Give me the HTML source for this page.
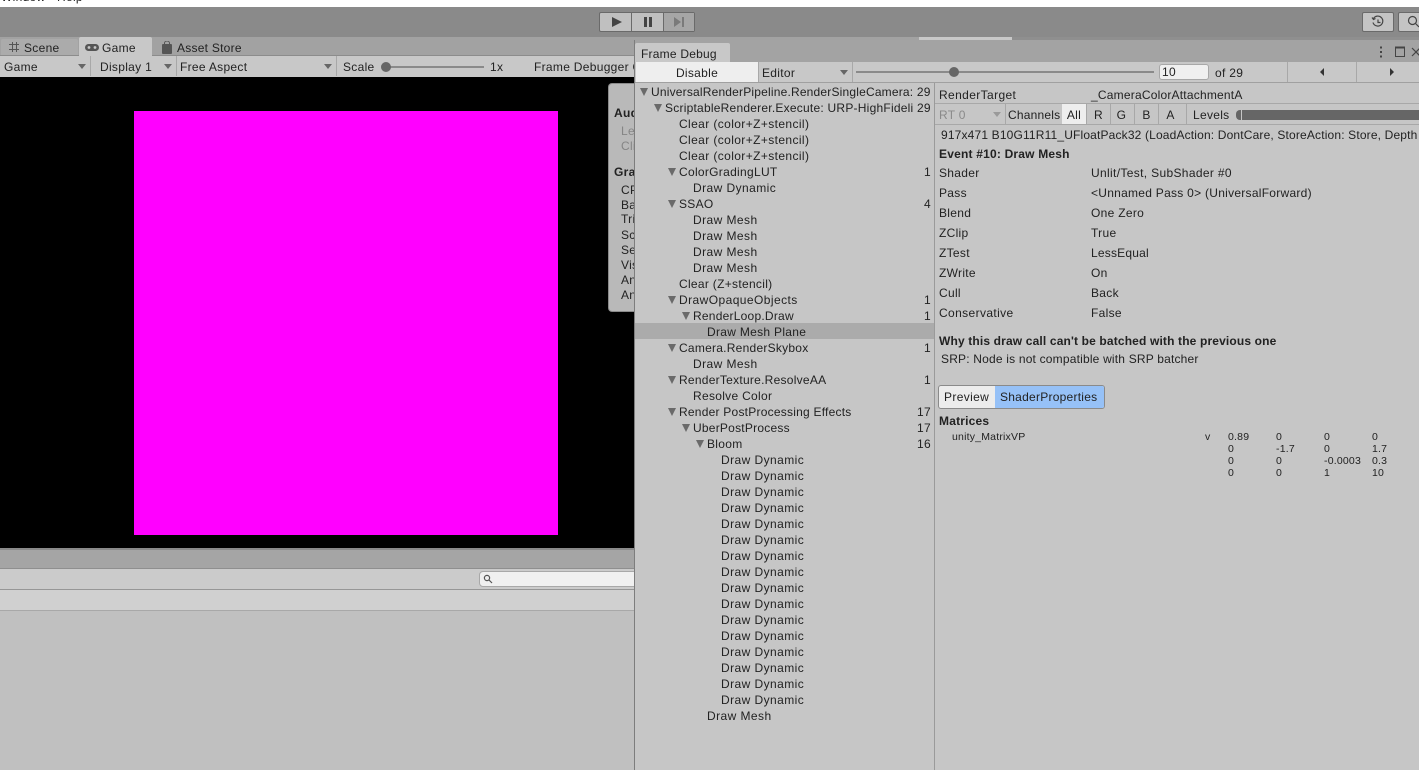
<!DOCTYPE html>
<html><head><meta charset="utf-8">
<style>
html,body{margin:0;padding:0;width:1419px;height:770px;overflow:hidden;background:#c0c0c0}
body{position:relative;font-family:"Liberation Sans",sans-serif;font-size:12px;color:#222}
.b{position:absolute}
.t{position:absolute;line-height:16px;height:16px;white-space:nowrap;letter-spacing:.3px}
.a{letter-spacing:.43px}
.r{position:absolute;line-height:16px;height:16px;white-space:nowrap;letter-spacing:.3px;text-align:right}
.tri{position:absolute;width:0;height:0;margin-left:1px;border-left:4px solid transparent;border-right:4px solid transparent;border-top:8px solid #6a6a6a}
.dd{position:absolute;width:0;height:0;border-left:4px solid transparent;border-right:4px solid transparent;border-top:5px solid #666}
.s{font-size:10.5px;letter-spacing:.2px;line-height:12px;height:12px}
svg{position:absolute;display:block}
</style></head><body>

<!-- OS menu -->
<div class="b" style="left:0;top:0;width:1419px;height:7px;background:#fff;overflow:hidden">
<span class="t" style="left:1px;top:-11px">Window</span><span class="t" style="left:57px;top:-11px">Help</span></div>

<!-- main toolbar -->
<div class="b" style="left:0;top:7px;width:1419px;height:30px;background:#8a8a8a"></div>
<div class="b" style="left:599px;top:12px;width:96px;height:20px;background:#c0c0c0;border:1px solid #6a6a6a;box-sizing:border-box;border-radius:2px"></div>
<div class="b" style="left:631px;top:12px;width:1px;height:20px;background:#6a6a6a"></div>
<div class="b" style="left:664px;top:13px;width:30px;height:18px;background:#a6a6a6"></div>
<div class="b" style="left:663px;top:12px;width:1px;height:20px;background:#6a6a6a"></div>
<svg style="left:611px;top:16px" width="12" height="12"><path d="M1 1L11 6L1 11Z" fill="#444"/></svg>
<svg style="left:643px;top:16px" width="10" height="12"><path d="M1 1h3v10H1zM6 1h3v10H6z" fill="#444"/></svg>
<svg style="left:673px;top:16px" width="12" height="12"><path d="M1 1L8 6L1 11Z M9 1h2v10H9z" fill="#7a7a7a"/></svg>
<div class="b" style="left:1362px;top:12px;width:32px;height:20px;background:#c4c4c4;border:1px solid #6a6a6a;box-sizing:border-box;border-radius:2px"></div>
<svg style="left:1371px;top:15px" width="14" height="14" fill="none" stroke="#444" stroke-width="1.2"><path d="M2.5 3.5A5 5 0 1 1 2 7.5M1 2.5L2.5 4.5L4.5 3.5M7 4.5V7.5H9.5"/></svg>
<div class="b" style="left:1398px;top:12px;width:24px;height:20px;background:#c4c4c4;border:1px solid #6a6a6a;box-sizing:border-box;border-radius:2px"></div>
<svg style="left:1407px;top:15px" width="12" height="14" fill="none" stroke="#444" stroke-width="1.2"><circle cx="5.5" cy="5.5" r="4"/><path d="M8.5 8.5L12 12"/></svg>

<!-- tab strip -->
<div class="b" style="left:0;top:37px;width:1419px;height:19px;background:#a2a2a2"></div>
<div class="b" style="left:1012px;top:37px;width:407px;height:3px;background:#8f8f8f"></div>
<div class="b" style="left:0;top:55px;width:636px;height:1px;background:#8c8c8c"></div>
<div class="b" style="left:1px;top:39px;width:77px;height:16px;background:#ababab;border-radius:2px 2px 0 0"></div>
<svg style="left:8px;top:41px" width="12" height="12" stroke="#555" stroke-width="1" fill="none"><path d="M4.5 1v10M8.5 1v10M1 3.5h10M1 8.5h10"/></svg>
<span class="t" style="left:24px;top:40px">Scene</span>
<div class="b" style="left:79px;top:37px;width:73px;height:19px;background:#c8c8c8;border-radius:2px 2px 0 0"></div>
<svg style="left:85px;top:43px" width="14" height="10"><rect x="0" y="1" width="14" height="7" rx="3.5" fill="#555"/><circle cx="4" cy="4.5" r="1.4" fill="#c8c8c8"/><circle cx="10" cy="4.5" r="1.4" fill="#c8c8c8"/></svg>
<span class="t" style="left:102px;top:40px">Game</span>
<svg style="left:162px;top:41px" width="11" height="13"><rect x="0" y="3" width="10" height="10" rx="1" fill="#555"/><path d="M2.5 4V2a2.5 2 0 0 1 5 0v2" fill="none" stroke="#555"/></svg>
<span class="t" style="left:177px;top:40px;letter-spacing:.25px">Asset Store</span>

<!-- game toolbar -->
<div class="b" style="left:0;top:56px;width:636px;height:21px;background:#c8c8c8"></div>
<div class="b" style="left:90px;top:56px;width:1px;height:20px;background:#a8a8a8"></div>
<div class="b" style="left:176px;top:56px;width:1px;height:20px;background:#a8a8a8"></div>
<div class="b" style="left:336px;top:56px;width:1px;height:20px;background:#a8a8a8"></div>
<span class="t" style="left:4px;top:59px">Game</span><div class="dd" style="left:78px;top:64px"></div>
<span class="t" style="left:100px;top:59px">Display 1</span><div class="dd" style="left:164px;top:64px"></div>
<span class="t" style="left:180px;top:59px">Free Aspect</span><div class="dd" style="left:324px;top:64px"></div>
<span class="t" style="left:343px;top:59px">Scale</span>
<div class="b" style="left:386px;top:66px;width:98px;height:2px;background:#8a8a8a"></div>
<div class="b" style="left:381px;top:62px;width:10px;height:10px;border-radius:50%;background:#666"></div>
<span class="t" style="left:490px;top:59px">1x</span>
<span class="t" style="left:534px;top:59px">Frame Debugger O</span>

<!-- game view -->
<div class="b" style="left:0;top:77px;width:636px;height:471px;background:#000"></div>
<div class="b" style="left:134px;top:111px;width:424px;height:424px;background:#f0f"></div>

<!-- stats -->
<div class="b" style="left:609px;top:84px;width:30px;height:227px;background:#b9b9b9;border-radius:3px;box-shadow:0 0 0 1px #8a8a8a;overflow:hidden">
<span class="t" style="left:5px;top:21px;font-weight:bold">Audio</span>
<span class="t" style="left:12px;top:39px;color:#858585">Level</span>
<span class="t" style="left:12px;top:54px;color:#858585">Clip</span>
<span class="t" style="left:5px;top:80px;font-weight:bold">Graphics</span>
<span class="t" style="left:12px;top:98px">CPU</span>
<span class="t" style="left:12px;top:113px">Batches</span>
<span class="t" style="left:12px;top:127px">Tris</span>
<span class="t" style="left:12px;top:143px">Screen</span>
<span class="t" style="left:12px;top:158px">SetPass</span>
<span class="t" style="left:12px;top:173px">Visible</span>
<span class="t" style="left:12px;top:188px">Animations</span>
<span class="t" style="left:12px;top:203px">Animator</span>
</div>

<!-- bottom panels -->
<div class="b" style="left:0;top:548px;width:636px;height:2px;background:#8a8a8a"></div>
<div class="b" style="left:0;top:550px;width:636px;height:18px;background:#a5a5a5"></div>
<div class="b" style="left:0;top:568px;width:636px;height:1px;background:#8f8f8f"></div>
<div class="b" style="left:0;top:569px;width:636px;height:20px;background:#cbcbcb"></div>
<div class="b" style="left:0;top:589px;width:636px;height:1px;background:#969696"></div>
<div class="b" style="left:0;top:590px;width:636px;height:20px;background:#d0d0d0"></div>
<div class="b" style="left:0;top:610px;width:636px;height:1px;background:#a8a8a8"></div>
<div class="b" style="left:0;top:611px;width:636px;height:159px;background:#c0c0c0"></div>
<div class="b" style="left:479px;top:571px;width:160px;height:16px;background:#f0f0f0;border:1px solid #a8a8a8;box-sizing:border-box;border-radius:4px"></div>
<svg style="left:483px;top:574px" width="10" height="10" fill="none" stroke="#555" stroke-width="1.2"><circle cx="4" cy="4" r="2.6"/><path d="M6 6L9 9"/></svg>

<!-- thin strip of window behind -->
<div class="b" style="left:919px;top:37px;width:93px;height:3px;background:#c8c8c8"></div>

<!-- FRAME DEBUG WINDOW -->
<div class="b" style="left:634px;top:40px;width:785px;height:730px;background:#c6c6c6;border-left:1px solid #7d7d7d;box-sizing:border-box"></div>
<div class="b" style="left:635px;top:40px;width:784px;height:22px;background:#a3a3a3"></div>
<div class="b" style="left:635px;top:43px;width:95px;height:19px;background:#c8c8c8;border-radius:2px 2px 0 0"></div>
<span class="t" style="left:641px;top:46px;letter-spacing:.22px">Frame Debug</span>
<svg style="left:1378px;top:45px" width="41" height="14" fill="none" stroke="#444"><path d="M3 1.5v2M3 6v2M3 10.5v2" stroke-width="2"/><rect x="17.5" y="2.5" width="9" height="9" stroke-width="1"/><path d="M17 2.5h10" stroke-width="2"/><path d="M34 3l8 8M42 3l-8 8" stroke-width="1.2"/></svg>

<!-- FD toolbar -->
<div class="b" style="left:635px;top:62px;width:784px;height:20px;background:#c8c8c8"></div>
<div class="b" style="left:635px;top:82px;width:784px;height:1px;background:#a0a0a0"></div>
<div class="b" style="left:636px;top:62px;width:122px;height:20px;background:#eeeeee"></div>
<span class="t" style="left:636px;top:65px;width:122px;text-align:center">Disable</span>
<div class="b" style="left:758px;top:62px;width:1px;height:20px;background:#a8a8a8"></div>
<span class="t" style="left:762px;top:65px">Editor</span><div class="dd" style="left:840px;top:70px"></div>
<div class="b" style="left:852px;top:62px;width:1px;height:20px;background:#a8a8a8"></div>
<div class="b" style="left:856px;top:71px;width:298px;height:2px;background:#8a8a8a"></div>
<div class="b" style="left:949px;top:67px;width:10px;height:10px;border-radius:50%;background:#666"></div>
<div class="b" style="left:1159px;top:64px;width:50px;height:16px;background:#f0f0f0;border:1px solid #a8a8a8;box-sizing:border-box;border-radius:3px"></div>
<span class="t" style="left:1162px;top:64px">10</span>
<span class="t" style="left:1215px;top:65px">of 29</span>
<div class="b" style="left:1287px;top:62px;width:1px;height:20px;background:#a8a8a8"></div>
<div class="b" style="left:1356px;top:62px;width:1px;height:20px;background:#a8a8a8"></div>
<svg style="left:1320px;top:68px" width="5" height="8"><path d="M4 0V8L0 4Z" fill="#333"/></svg>
<svg style="left:1390px;top:68px" width="5" height="8"><path d="M0 0V8L4 4Z" fill="#333"/></svg>

<!-- tree divider -->
<div class="b" style="left:934px;top:83px;width:1px;height:687px;background:#9a9a9a"></div>
<div class="b" style="left:635px;top:323px;width:299px;height:16px;background:#ababab"></div>

<!-- tree -->
<div class="tri" style="left:639px;top:88px"></div><span class="t" style="left:651px;top:84px;letter-spacing:.19px">UniversalRenderPipeline.RenderSingleCamera: 29</span>
<div class="tri" style="left:653px;top:104px"></div><span class="t" style="left:665px;top:100px;letter-spacing:.23px">ScriptableRenderer.Execute: URP-HighFideli 29</span>
<span class="t a" style="left:679px;top:116px;letter-spacing:.39px">Clear (color+Z+stencil)</span>
<span class="t a" style="left:679px;top:132px;letter-spacing:.39px">Clear (color+Z+stencil)</span>
<span class="t a" style="left:679px;top:148px;letter-spacing:.39px">Clear (color+Z+stencil)</span>
<div class="tri" style="left:667px;top:168px"></div><span class="t" style="left:679px;top:164px">ColorGradingLUT</span><span class="r" style="right:488px;top:164px">1</span>
<span class="t a" style="left:693px;top:180px">Draw Dynamic</span>
<div class="tri" style="left:667px;top:200px"></div><span class="t" style="left:679px;top:196px">SSAO</span><span class="r" style="right:488px;top:196px">4</span>
<span class="t a" style="left:693px;top:212px">Draw Mesh</span>
<span class="t a" style="left:693px;top:228px">Draw Mesh</span>
<span class="t a" style="left:693px;top:244px">Draw Mesh</span>
<span class="t a" style="left:693px;top:260px">Draw Mesh</span>
<span class="t" style="left:679px;top:276px">Clear (Z+stencil)</span>
<div class="tri" style="left:667px;top:296px"></div><span class="t a" style="left:679px;top:292px">DrawOpaqueObjects</span><span class="r" style="right:488px;top:292px">1</span>
<div class="tri" style="left:681px;top:312px"></div><span class="t" style="left:693px;top:308px;letter-spacing:.23px">RenderLoop.Draw</span><span class="r" style="right:488px;top:308px">1</span>
<span class="t" style="left:707px;top:324px">Draw Mesh Plane</span>
<div class="tri" style="left:667px;top:344px"></div><span class="t" style="left:679px;top:340px;letter-spacing:.25px">Camera.RenderSkybox</span><span class="r" style="right:488px;top:340px">1</span>
<span class="t a" style="left:693px;top:356px">Draw Mesh</span>
<div class="tri" style="left:667px;top:376px"></div><span class="t" style="left:679px;top:372px;letter-spacing:.26px">RenderTexture.ResolveAA</span><span class="r" style="right:488px;top:372px">1</span>
<span class="t" style="left:693px;top:388px">Resolve Color</span>
<div class="tri" style="left:667px;top:408px"></div><span class="t" style="left:679px;top:404px;letter-spacing:.23px">Render PostProcessing Effects</span><span class="r" style="right:488px;top:404px">17</span>
<div class="tri" style="left:681px;top:424px"></div><span class="t" style="left:693px;top:420px;letter-spacing:.23px">UberPostProcess</span><span class="r" style="right:488px;top:420px">17</span>
<div class="tri" style="left:695px;top:440px"></div><span class="t" style="left:707px;top:436px">Bloom</span><span class="r" style="right:488px;top:436px">16</span>
<span class="t a" style="left:721px;top:452px">Draw Dynamic</span>
<span class="t a" style="left:721px;top:468px">Draw Dynamic</span>
<span class="t a" style="left:721px;top:484px">Draw Dynamic</span>
<span class="t a" style="left:721px;top:500px">Draw Dynamic</span>
<span class="t a" style="left:721px;top:516px">Draw Dynamic</span>
<span class="t a" style="left:721px;top:532px">Draw Dynamic</span>
<span class="t a" style="left:721px;top:548px">Draw Dynamic</span>
<span class="t a" style="left:721px;top:564px">Draw Dynamic</span>
<span class="t a" style="left:721px;top:580px">Draw Dynamic</span>
<span class="t a" style="left:721px;top:596px">Draw Dynamic</span>
<span class="t a" style="left:721px;top:612px">Draw Dynamic</span>
<span class="t a" style="left:721px;top:628px">Draw Dynamic</span>
<span class="t a" style="left:721px;top:644px">Draw Dynamic</span>
<span class="t a" style="left:721px;top:660px">Draw Dynamic</span>
<span class="t a" style="left:721px;top:676px">Draw Dynamic</span>
<span class="t a" style="left:721px;top:692px">Draw Dynamic</span>
<span class="t a" style="left:707px;top:708px">Draw Mesh</span>

<!-- right pane -->
<span class="t" style="left:939px;top:87px;letter-spacing:.38px">RenderTarget</span>
<span class="t" style="left:1091px;top:87px;letter-spacing:.21px">_CameraColorAttachmentA</span>
<div class="b" style="left:935px;top:103px;width:484px;height:1px;background:#a8a8a8"></div>
<div class="b" style="left:935px;top:124px;width:484px;height:1px;background:#a8a8a8"></div>
<span class="t" style="left:939px;top:107px;color:#8a8a8a">RT 0</span><div class="dd" style="left:993px;top:112px;border-top-color:#9a9a9a"></div>
<div class="b" style="left:1005px;top:104px;width:1px;height:20px;background:#a8a8a8"></div>
<span class="t" style="left:1008px;top:107px;letter-spacing:.2px">Channels</span>
<div class="b" style="left:1062px;top:104px;width:24px;height:20px;background:#eeeeee"></div>
<span class="t" style="left:1062px;top:107px;width:24px;text-align:center">All</span>
<div class="b" style="left:1086px;top:104px;width:1px;height:20px;background:#a8a8a8"></div>
<span class="t" style="left:1087px;top:107px;width:23px;text-align:center">R</span>
<div class="b" style="left:1110px;top:104px;width:1px;height:20px;background:#a8a8a8"></div>
<span class="t" style="left:1110px;top:107px;width:23px;text-align:center">G</span>
<div class="b" style="left:1134px;top:104px;width:1px;height:20px;background:#a8a8a8"></div>
<span class="t" style="left:1135px;top:107px;width:23px;text-align:center">B</span>
<div class="b" style="left:1158px;top:104px;width:1px;height:20px;background:#a8a8a8"></div>
<span class="t" style="left:1159px;top:107px;width:23px;text-align:center">A</span>
<div class="b" style="left:1186px;top:104px;width:1px;height:20px;background:#a8a8a8"></div>
<span class="t" style="left:1193px;top:107px">Levels</span>
<div class="b" style="left:1236px;top:110px;width:183px;height:10px;background:#666;border-radius:4px 0 0 4px"></div>
<div class="b" style="left:1241px;top:110px;width:1px;height:10px;background:#c6c6c6"></div>

<span class="t" style="left:941px;top:127px;letter-spacing:.16px">917x471 B10G11R11_UFloatPack32 (LoadAction: DontCare, StoreAction: Store, Depth</span>
<span class="t" style="left:939px;top:146px;font-weight:bold;letter-spacing:.2px">Event #10: Draw Mesh</span>

<span class="t" style="left:939px;top:165px">Shader</span><span class="t" style="left:1091px;top:165px;letter-spacing:.34px">Unlit/Test, SubShader #0</span>
<span class="t" style="left:939px;top:185px">Pass</span><span class="t" style="left:1091px;top:185px;letter-spacing:.27px">&lt;Unnamed Pass 0&gt; (UniversalForward)</span>
<span class="t" style="left:939px;top:205px">Blend</span><span class="t" style="left:1091px;top:205px">One Zero</span>
<span class="t" style="left:939px;top:225px">ZClip</span><span class="t" style="left:1091px;top:225px">True</span>
<span class="t" style="left:939px;top:245px">ZTest</span><span class="t" style="left:1091px;top:245px;letter-spacing:.2px">LessEqual</span>
<span class="t" style="left:939px;top:265px">ZWrite</span><span class="t" style="left:1091px;top:265px">On</span>
<span class="t" style="left:939px;top:285px">Cull</span><span class="t" style="left:1091px;top:285px">Back</span>
<span class="t" style="left:939px;top:305px;letter-spacing:.38px">Conservative</span><span class="t" style="left:1091px;top:305px">False</span>

<span class="t" style="left:939px;top:333px;font-weight:bold;letter-spacing:.15px">Why this draw call can't be batched with the previous one</span>
<span class="t" style="left:941px;top:351px;letter-spacing:.19px">SRP: Node is not compatible with SRP batcher</span>

<div class="b" style="left:938px;top:385px;width:167px;height:24px;border:1px solid #8a8a8a;box-sizing:border-box;border-radius:3px;background:#ececec;overflow:hidden">
<div class="b" style="left:56px;top:0;width:110px;height:22px;background:#96c1f7"></div></div>
<span class="t" style="left:944px;top:389px;letter-spacing:.35px">Preview</span>
<span class="t" style="left:1000px;top:389px;letter-spacing:.25px">ShaderProperties</span>

<span class="t" style="left:939px;top:413px;font-weight:bold;letter-spacing:.2px">Matrices</span>
<span class="t s" style="left:952px;top:431px">unity_MatrixVP</span>
<span class="t s" style="left:1205px;top:431px">v</span>
<span class="t s" style="left:1228px;top:431px">0.89</span><span class="t s" style="left:1276px;top:431px">0</span><span class="t s" style="left:1324px;top:431px">0</span><span class="t s" style="left:1372px;top:431px">0</span>
<span class="t s" style="left:1228px;top:443px">0</span><span class="t s" style="left:1276px;top:443px">-1.7</span><span class="t s" style="left:1324px;top:443px">0</span><span class="t s" style="left:1372px;top:443px">1.7</span>
<span class="t s" style="left:1228px;top:455px">0</span><span class="t s" style="left:1276px;top:455px">0</span><span class="t s" style="left:1324px;top:455px">-0.0003</span><span class="t s" style="left:1372px;top:455px">0.3</span>
<span class="t s" style="left:1228px;top:467px">0</span><span class="t s" style="left:1276px;top:467px">0</span><span class="t s" style="left:1324px;top:467px">1</span><span class="t s" style="left:1372px;top:467px">10</span>

</body></html>
